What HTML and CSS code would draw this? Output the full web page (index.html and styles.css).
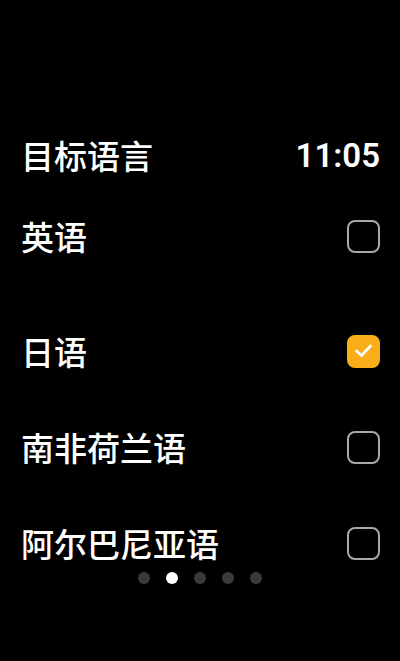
FILE: index.html
```html
<!DOCTYPE html>
<html>
<head>
  <meta charset="UTF-8">
  <title>目标语言</title>
  <link rel="stylesheet" href="styles.css">
</head>
<body>
  <div class="screen">
    <div class="header">
      <span class="header-title">目标语言</span>
      <span class="header-time">11:05</span>
    </div>

    <div class="lang-list">
      <div class="lang-item first">
        <span class="lang-name">英语</span>
        <span class="check"></span>
      </div>
      <div class="lang-item">
        <span class="lang-name">日语</span>
        <span class="check checked">
          <svg viewBox="0 0 33 33" width="33" height="33">
            <path d="M9.5 17 L14.5 21.5 L23.5 12" fill="none" stroke="#fff" stroke-width="2.8" stroke-linecap="round" stroke-linejoin="round"/>
          </svg>
        </span>
      </div>
      <div class="lang-item">
        <span class="lang-name">南非荷兰语</span>
        <span class="check"></span>
      </div>
      <div class="lang-item">
        <span class="lang-name">阿尔巴尼亚语</span>
        <span class="check"></span>
      </div>
    </div>

    <!-- 页面指示器 -->
    <div class="page-dots">
      <span class="dot"></span>
      <span class="dot active"></span>
      <span class="dot"></span>
      <span class="dot"></span>
      <span class="dot"></span>
    </div>
  </div>
</body>
</html>
```

FILE: styles.css
```css
html, body {
  margin: 0;
  padding: 0;
  background-color: #000;
}

body {
  width: 400px;
  height: 661px;
  overflow: hidden;
  font-family: "Noto Sans CJK SC", "Noto Sans", sans-serif;
  color: #fff;
}

.screen {
  position: relative;
  height: 661px;
  padding: 125px 20px 0 21px;
  box-sizing: border-box;
}

.header {
  display: flex;
  justify-content: space-between;
  align-items: center;
  height: 60px;
}

.header-title {
  font-size: 33px;
  font-weight: 500;
  line-height: 1;
}

.header-time {
  font-family: Roboto, "Liberation Sans", sans-serif;
  font-weight: 600;
  font-size: 33px;
  line-height: 1;
}

.lang-list {
  margin-top: 3px;
}

.lang-item {
  display: flex;
  justify-content: space-between;
  align-items: center;
  height: 96px;
}

.lang-item.first {
  margin-bottom: 19px;
}

.lang-name {
  font-size: 33px;
  font-weight: 500;
  line-height: 1;
}

.check {
  position: relative;
  width: 33px;
  height: 33px;
  box-sizing: border-box;
  border: 2.5px solid #a8a8a8;
  border-radius: 8px;
}

.check.checked {
  background-color: #f9ae1a;
  border-color: #f9ae1a;
}

.check svg {
  position: absolute;
  left: -2.5px;
  top: -2.5px;
  display: block;
}

.page-dots {
  position: absolute;
  left: 0;
  right: 0;
  top: 572px;
  display: flex;
  justify-content: center;
  gap: 16px;
}

.dot {
  width: 12px;
  height: 12px;
  border-radius: 50%;
  background-color: #3b3b3b;
}

.dot.active {
  background-color: #fff;
}
```
